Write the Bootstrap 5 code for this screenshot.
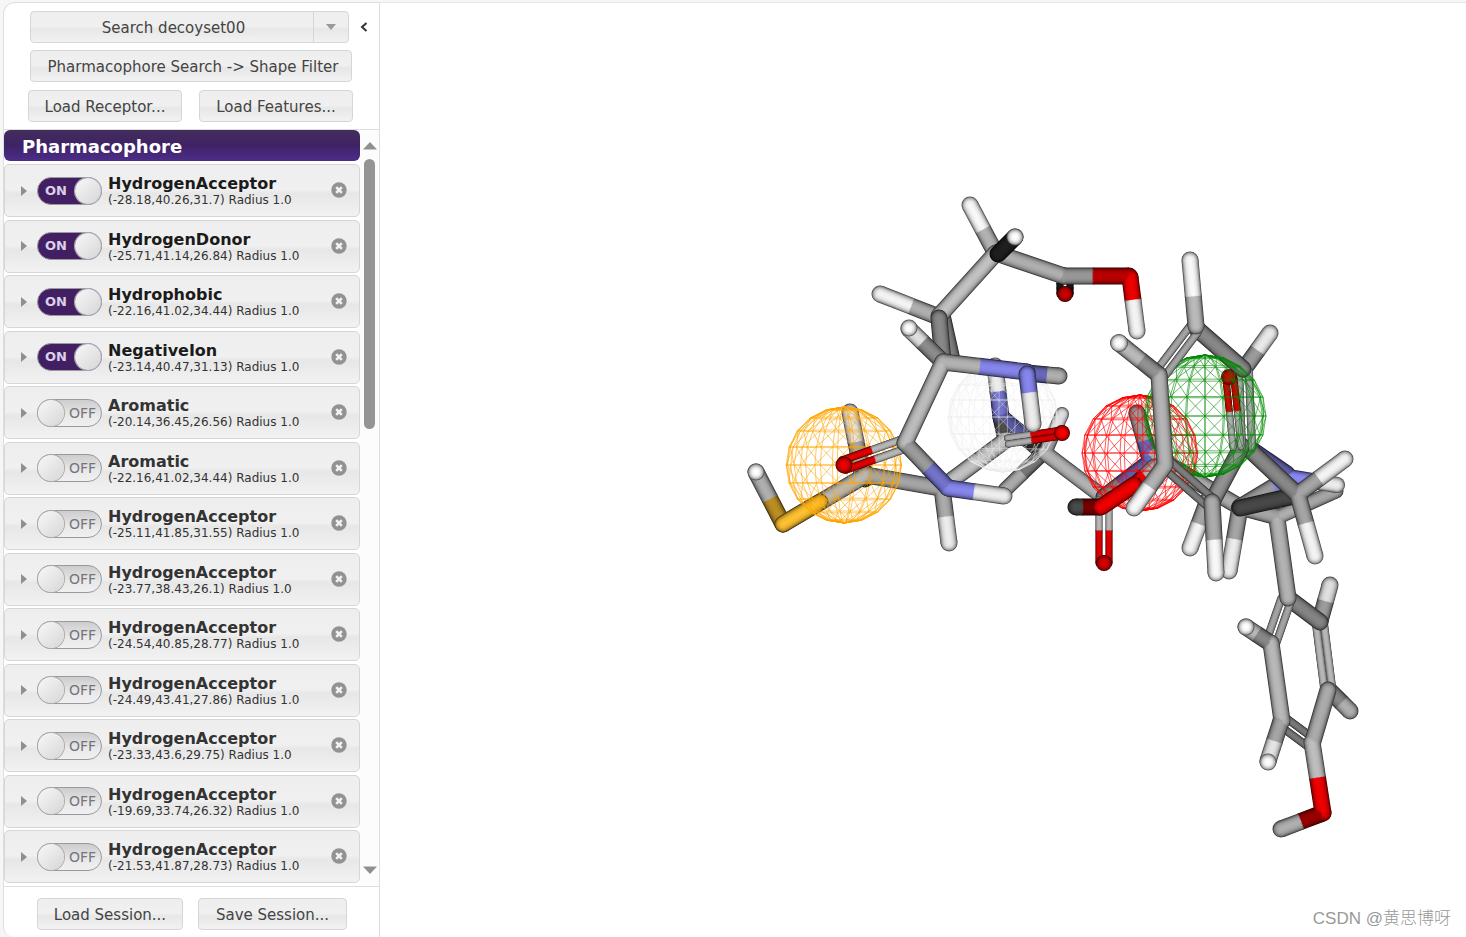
<!DOCTYPE html>
<html lang="en">
<head>
<meta charset="utf-8">
<meta name="viewport" content="width=device-width, initial-scale=1">
<title>Pharmacophore Search</title>
<link href="https://cdn.jsdelivr.net/npm/bootstrap@5.3.0/dist/css/bootstrap.min.css" rel="stylesheet">
<script src="https://cdn.jsdelivr.net/npm/bootstrap@5.3.0/dist/js/bootstrap.bundle.min.js"></script>
<style>
  body { background: #f6f6f6; font-family: "DejaVu Sans", Verdana, sans-serif; color: #333; }
  .app { padding: 2px 0 0 3px; }
  .side { width: 377px; background: #fff; border: 1px solid #dedede; border-bottom: 0; border-radius: 12px 0 0 10px; }
  .stage { background: #fff; border-top: 1px solid #e8e8e8; }
  .ui-btn {
    --bs-btn-color: #444; --bs-btn-border-color: #d6d6d6; --bs-btn-hover-color: #222; --bs-btn-hover-border-color: #bbb;
    --bs-btn-border-radius: 4px; --bs-btn-padding-y: 0; --bs-btn-padding-x: 0; --bs-btn-font-size: 15px;
    height: 32px; line-height: 32px; white-space: nowrap;
  }
  .ui-btn, .feature { background: linear-gradient(#eee 0%, #f0f0f0 48%, #e7e7e7 56%, #f2f2f2 100%); }
  .side-top { height: 127px; padding: 8px 26px 0 24px; border-bottom: 1px solid #dedede; }
  .search-row { padding-left: 2px; margin-bottom: 7px; }
  .search-row .main-btn { width: 284px; padding-left: 3px; }
  .search-row .drop-btn { width: 36px; }
  .filter-btn { width: 322px; margin-left: 2px; padding-left: 4px; }
  .pair-btn { width: 154px; }
  .collapse-btn { width: 20px; height: 24px; margin: 4px -21px 0 0; }
  .panel-title { height: 31px; line-height: 33px; border-radius: 6px; padding-left: 18px; font-size: 18px; font-weight: 700; color: #fff;
    background: linear-gradient(#422e5b 0%, #3f2265 48%, #42246e 60%, #4c2d89 100%); }
  .list-wrap { min-height: 0; }
  .features { width: 356px; padding-bottom: 3px; }
  .feature-list { margin: 3px 0 0; }
  .feature { height: 53px; border: 1px solid #d6d6d6; border-radius: 5px; color: #333; }
  .expander { width: 32px; height: 32px; padding: 0 0 0 6px; }
  .feature-text { padding-top: 2px; }
  .feature-name { font-size: 16px; line-height: 18px; font-weight: 700; }
  .feature-on .feature-name { color: #1b1b1b; }
  .feature-pos { font-size: 12px; line-height: 15px; }
  .toggle { width: 65px; height: 28px; margin-right: 6px; }
  .toggle input { appearance: none; width: 65px; height: 28px; margin: 0; border: 1px solid #9b98a0; border-radius: 14px; display: block;
    background: linear-gradient(#cdcdcd, #e9e9e9 60%, #f0f0f0); }
  .toggle input:checked { border-color: #9b98a0; background: #421f63; }
  .toggle input::before { content: ""; display: block; width: 26px; height: 26px; border-radius: 50%;
    background: linear-gradient(135deg, #f8f8f8, #d6d6d6); box-shadow: 0 0 0 1px #a9a9ad; }
  .toggle input:checked::before { margin-left: 37px; }
  .toggle span { position: absolute; top: 0; line-height: 28px; font-size: 13px; pointer-events: none; }
  .toggle .txt-off { right: 6px; color: #74747c; font-size: 14px; }
  .toggle .txt-on { left: 8px; color: #dccfe8; font-weight: 700; }
  .close-btn { width: 16px; height: 16px; margin: -1px 12px 0 0; }
  .scroller { width: 19px; background: #fcfcfc; padding: 12px 0 12px; }
  .scroller button { height: 8px; }
  .thumb { width: 11px; height: 270px; margin-top: 9px; border-radius: 6px; background: #949494; }
  .side-bottom { height: 51px; padding: 11px 32px 0 33px; border-top: 1px solid #dedede; }
  .load-btn { width: 146px; }
  .save-btn { width: 149px; }
  .credit { position: absolute; right: 15px; bottom: 5px; font: 17px/26px "Liberation Sans", "Noto Sans CJK SC", sans-serif; font-weight: 300; color: #999; }
  .stage-svg { position: absolute; inset: 0; }
</style>
</head>
<body>
<div class="app d-flex vh-100">
  <aside class="side d-flex flex-column flex-shrink-0">
    <div class="side-top d-flex flex-column">
      <div class="search-row d-flex align-items-start">
        <div class="btn-group">
          <button class="btn ui-btn main-btn flex-grow-0" type="button">Search decoyset00</button>
          <button class="btn ui-btn drop-btn flex-grow-0 d-flex align-items-center justify-content-center" type="button" aria-label="More searches"><svg width="10" height="6"><path d="M0 0H10L5 6Z" fill="#999"/></svg></button>
        </div>
        <button class="btn border-0 p-0 collapse-btn ms-auto d-flex align-items-center justify-content-center" type="button" aria-label="Collapse panel"><svg width="8" height="10"><path d="M6.500 1L2 5L6.500 9" fill="none" stroke="#333" stroke-width="2"/></svg></button>
      </div>
      <button class="btn ui-btn filter-btn mb-2" type="button">Pharmacophore Search -&gt; Shape Filter</button>
      <div class="d-flex justify-content-between">
        <button class="btn ui-btn pair-btn" type="button">Load Receptor...</button>
        <button class="btn ui-btn pair-btn" type="button">Load Features...</button>
      </div>
    </div>
    <div class="list-wrap d-flex flex-grow-1">
      <div class="features d-flex flex-column">
        <h1 class="panel-title mb-0">Pharmacophore</h1>
        <ul class="feature-list list-unstyled d-flex flex-column justify-content-between flex-grow-1" id="features"></ul>
      </div>
      <div class="scroller d-flex flex-column align-items-center">
        <button class="btn border-0 p-0 lh-1 d-flex" type="button" aria-label="Scroll up"><svg width="14" height="8"><path d="M0 7.500L7 0L14 7.500Z" fill="#8f8f8f"/></svg></button>
        <div class="thumb"></div>
        <button class="btn border-0 p-0 lh-1 d-flex mt-auto" type="button" aria-label="Scroll down"><svg width="14" height="8"><path d="M0 .5L7 8L14 .5Z" fill="#8f8f8f"/></svg></button>
      </div>
    </div>
    <div class="side-bottom d-flex justify-content-between">
      <button class="btn ui-btn load-btn" type="button">Load Session...</button>
      <button class="btn ui-btn save-btn" type="button">Save Session...</button>
    </div>
  </aside>
  <main class="stage flex-grow-1 position-relative overflow-hidden">
    <svg id="mol" class="stage-svg w-100 h-100" viewBox="380 3 1086 934" role="img" aria-label="Molecule with pharmacophore spheres"></svg>
    <div class="credit">CSDN @黄思博呀</div>
  </main>
</div>
<script>
const features = [
  ['HydrogenAcceptor', '-28.18,40.26,31.7', 1], ['HydrogenDonor', '-25.71,41.14,26.84', 1],
  ['Hydrophobic', '-22.16,41.02,34.44', 1], ['NegativeIon', '-23.14,40.47,31.13', 1],
  ['Aromatic', '-20.14,36.45,26.56', 0], ['Aromatic', '-22.16,41.02,34.44', 0],
  ['HydrogenAcceptor', '-25.11,41.85,31.55', 0], ['HydrogenAcceptor', '-23.77,38.43,26.1', 0],
  ['HydrogenAcceptor', '-24.54,40.85,28.77', 0], ['HydrogenAcceptor', '-24.49,43.41,27.86', 0],
  ['HydrogenAcceptor', '-23.33,43.6,29.75', 0], ['HydrogenAcceptor', '-19.69,33.74,26.32', 0],
  ['HydrogenAcceptor', '-21.53,41.87,28.73', 0]
];
document.getElementById('features').innerHTML = features.map(([name, pos, on]) => `
  <li class="feature d-flex align-items-center ${on ? 'feature-on' : ''}">
    <button class="btn border-0 expander d-flex align-items-center justify-content-center" type="button" aria-label="Expand ${name}"><svg width="6" height="10"><path d="M0 0L6 5L0 10Z" fill="#8f8f8f"/></svg></button>
    <label class="toggle position-relative"><input type="checkbox" role="switch" aria-label="${name} ${pos}" ${on ? 'checked' : ''}><span class="${on ? 'txt-on' : 'txt-off'}">${on ? 'ON' : 'OFF'}</span></label>
    <div class="feature-text flex-grow-1"><div class="feature-name">${name}</div><div class="feature-pos">(${pos}) Radius 1.0</div></div>
    <button class="btn border-0 p-0 close-btn d-flex" type="button" aria-label="Remove ${name}"><svg width="16" height="16"><circle cx="8" cy="8" r="7.700" fill="#929292"/><path d="M5.200 5.200L10.800 10.800M10.800 5.200L5.200 10.800" stroke="#f2f2f2" stroke-width="2.600"/></svg></button>
  </li>`).join('');

// Stick model: element colours, shaded by nested strokes from rim to centre.
// Sticks of one depth group share their shading layers, so that joints blend; flush() closes a group.
const tint = { C: [194, 194, 194], H: [248, 248, 248], N: [137, 137, 242], O: [238, 0, 0], S: [252, 192, 48] };
const shade = [[1, .3], [.93, .5], [.86, .66], [.77, .77], [.66, .86], [.54, .93], [.4, .97], [.22, 1]];
const rgb = (el, f) => 'rgb(' + tint[el].map(v => Math.min(255, Math.round(v * f))) + ')';
let out = '', layers = shade.map(() => '');
function flush() { out += layers.join(''); layers = shade.map(() => ''); }
function ball(x, y, r, el, k = 1) {
  flush();
  shade.forEach(([s, f]) => out += `<circle cx="${x}" cy="${y}" r="${r * s}" fill="${rgb(el, f * k)}"/>`);
}
function half(n, x, y, mx, my, color, w) {
  layers[n] += `<path d="M${x} ${y}L${mx} ${my}" stroke="${color}" stroke-width="${w}"/><circle cx="${x}" cy="${y}" r="${w / 2}" fill="${color}"/>`;
}
function bond(x1, y1, x2, y2, a, b = a, cut = .5, k = 1, kb = k, w = 17) {
  const dx = x2 - x1, dy = y2 - y1, back = cut - 1 / Math.hypot(dx, dy);
  shade.forEach(([s, f], n) => {
    if (a === b && k === kb) {
      layers[n] += `<path d="M${x1} ${y1}L${x2} ${y2}" stroke="${rgb(b, f * kb)}" stroke-width="${w * s}" stroke-linecap="round"/>`;
    } else {
      half(n, x2, y2, x1 + dx * back, y1 + dy * back, rgb(b, f * kb), w * s);
      half(n, x1, y1, x1 + dx * cut, y1 + dy * cut, rgb(a, f * k), w * s);
    }
  });
}
function twin(x1, y1, x2, y2, a, b = a, cut = .5, k = 1, gap = 5, w = 7) {
  flush();
  const d = Math.hypot(x2 - x1, y2 - y1), nx = -(y2 - y1) / d * gap, ny = (x2 - x1) / d * gap;
  bond(x1 + nx, y1 + ny, x2 + nx, y2 + ny, a, b, cut, k, k, w);
  flush();
  bond(x1 - nx, y1 - ny, x2 - nx, y2 - ny, a, b, cut, k, k, w);
  flush();
}
// Wireframe sphere: 20 x 10 quads, each split by a diagonal.
function mesh(cx, cy, r, color, turn, width, opacity = 1) {
  flush();
  const p = (i, j) => {
    const t = j * Math.PI / 10, f = i * Math.PI / 10 + turn;
    const q = r * (1 + Math.sin(t) * Math.cos(f) * .035);
    return (cx + q * Math.sin(t) * Math.sin(f)).toFixed(1) + ' ' + (cy - q * Math.cos(t)).toFixed(1);
  };
  let d = '';
  for (let i = 0; i < 20; i++) for (let j = 0; j < 10; j++) d += `M${p(i, j)}L${p(i, j + 1)}L${p(i + 1, j)}L${p(i, j)}`;
  out += `<path d="${d}" fill="none" stroke="${color}" stroke-width="${width}" opacity="${opacity}"/>`;
}

// Left fragment, rear atoms
bond(865, 479, 865, 472, 'C', 'C', .5, .1);
flush();
bond(850, 412, 862, 472, 'H', 'C', .5, .92, .85);
flush();
bond(942, 315, 952, 360, 'C', 'C', .5, .66);
flush();
bond(995, 366, 1001, 417, 'H', 'N', .5, .95, .85);
bond(1001, 417, 1044, 453, 'N', 'C', .62, .65, .2);
bond(1001, 417, 1006, 440, 'N', 'C', .15, .65, .4);
flush();
bond(1005, 490, 1040, 456, 'C', 'C', .5, .88, .62, 15);
flush();
bond(1062, 414, 1045, 453, 'H', 'C', .4, .9, .85, 14);
bond(1103, 497, 1045, 453, 'C', 'C', .5, .92, .92, 16);
flush();
bond(949, 543, 942, 488, 'H', 'C', .48, .95, .88);
bond(866, 475, 940, 488, 'C', 'C', .5, .85);
bond(1006, 440, 944, 486, 'C');
bond(783, 524, 866, 475, 'S', 'C', .48, 1, .95);
flush();
bond(756, 472, 783, 524, 'C', 'S', .52, .9, .74);
flush();
bond(783, 524, 820, 502, 'S');
ball(756, 472, 8.500, 'H', 1.03);
mesh(844, 465, 58, '#ffa500', .12, .8, .75);
mesh(1003, 417, 55, '#ebebeb', .08, .7, .65);
twin(1062, 433, 1008, 441, 'O', 'C', .58, .9, 3, 7);
ball(1062, 433, 8, 'O', 1.050);

// Left fragment, front atoms
bond(970, 205, 996, 254, 'H', 'C', .5, 1, .92);
bond(880, 294, 939, 317, 'H', 'C', .53, .98, .9);
flush();
twin(1065, 283, 1065, 294, 'C', 'O', .5, .12, 5, 7);
ball(1065, 294, 8, 'O', .85);
bond(939, 316, 996, 253, 'C', 'C', .5, 1);
bond(1064, 276, 996, 253, 'C', 'C', .5, .9);
bond(1129, 276, 1064, 276, 'O', 'C', .56, .78, .78);
bond(1137, 331, 1130, 277, 'H', 'O', .58, .98, 1);
flush();
bond(1015, 237, 998, 254, 'C', 'C', .5, .16);
ball(1015, 237, 8.500, 'H', 1.03);
bond(939, 318, 943, 362, 'C', 'C', .5, .7);
flush();
bond(909, 329, 943, 362, 'H', 'C', .4, .9, .72);
ball(909, 328, 8.500, 'H', 1.03);
bond(1059, 376, 1027, 373, 'C', 'N', .38, .9, .76);
twin(844, 465, 901, 445, 'O', 'C', .52, .95, 5, 8);
ball(844, 465, 8.500, 'O');
bond(905, 443, 948, 488, 'C', 'N', .55, .8, .84);
bond(943, 362, 905, 443, 'C', 'C', .5, .97);
bond(943, 362, 1027, 372, 'C', 'N', .44, .92, .97);
bond(1004, 496, 948, 488, 'H', 'N', .54, .96, .98);
flush();
bond(1033, 424, 1027, 374, 'H', 'N', .63, .95, .98);

// Lower ring
bond(1330, 585, 1320, 621, 'C', 'C', .45, 1.150, .8);
flush();
bond(1350, 711, 1329, 690, 'C', 'C', .4, .9, .7);
twin(1320, 624, 1328, 687, 'C', 'C', .5, .95, 4, 8);
bond(1288, 598, 1320, 622, 'C', 'C', .5, .68);
twin(1286, 600, 1271, 643, 'C', 'C', .5, .85, 5, 8);
twin(1283, 722, 1310, 742, 'C', 'C', .5, .62, 5, 8);
bond(1328, 690, 1313, 741, 'C', 'C', .5, .88);
bond(1281, 829, 1323, 813, 'C', 'O', .48, .9, .64);
bond(1323, 813, 1312, 742, 'O', 'C', .5, 1, .98);
bond(1246, 627, 1270, 643, 'C', 'C', .45, .95, .7);
bond(1271, 643, 1282, 721, 'C', 'C', .5, .95);
bond(1268, 761, 1281, 721, 'H', 'C', .5, .92, .85);
ball(1246, 627, 8.500, 'H', 1.03);
ball(1268, 762, 8.500, 'H', 1.03);

// Right fragment, rear atoms
bond(1104, 497, 1150, 462, 'C', 'N', .35, .7, .7);
bond(1137, 413, 1150, 459, 'C', 'N', .6, .8, .75);
bond(1150, 454, 1240, 507, 'C', 'C', .5, .88);
twin(1104, 563, 1104, 500, 'O', 'C', .52, .95, 5, 7);
ball(1104, 563, 8, 'O', .9);
bond(1155, 467, 1133, 487, 'C', 'O', .45, .9, .95);
mesh(1140, 453, 58, '#ff0000', .05, .8, .8);
bond(1076, 507, 1100, 507, 'C', 'O', .3, .38, .5);
flush();
bond(1101, 507, 1134, 485, 'O', 'O', .5, 1);
flush();
bond(1190, 548, 1208, 500, 'H', 'C', .5, .98, .85);
flush();
bond(1278, 517, 1336, 491, 'C', 'C', .5, .9, .85, 15);
bond(1240, 507, 1278, 517, 'C', 'C', .5, .85);
bond(1288, 598, 1277, 519, 'C', 'C', .5, .92);
bond(1229, 571, 1240, 507, 'H', 'C', .5, .95, .85);
flush();
bond(1287, 474, 1252, 450, 'N', 'N', .5, .7);
bond(1288, 478, 1240, 507, 'N', 'C', .3, .97, .8);
bond(1337, 485, 1288, 477, 'H', 'N', .35, .95, 1, 16);
flush();
bond(1298, 495, 1240, 508, 'C', 'C', .5, .37);
flush();
bond(1250, 450, 1298, 495, 'C', 'C', .5, .7);
bond(1315, 556, 1298, 495, 'H', 'C', .54, .98, .85);
bond(1345, 459, 1298, 494, 'H', 'C', .56, .98, .85);
flush();
bond(1242, 446, 1213, 500, 'C', 'C', .5, .75);
flush();
bond(1270, 333, 1244, 369, 'H', 'C', .48, .94, .8);
twin(1244, 372, 1247, 447, 'C', 'C', .5, .88, 5, 8);
twin(1230, 379, 1237, 447, 'O', 'C', .48, .9, 4, 7);
ball(1229, 377, 8, 'O', .9);
bond(1196, 328, 1243, 369, 'C', 'C', .5, .7);
mesh(1205, 416, 61, '#008a00', 0, .8, .75);

// Right fragment, front ring
twin(1165, 463, 1211, 503, 'C', 'C', .5, .65, 5, 8);
bond(1216, 573, 1212, 502, 'H', 'C', .47, 1, .88);
twin(1160, 374, 1194, 329, 'C', 'C', .5, .85, 5, 8);
bond(1190, 260, 1196, 326, 'H', 'C', .55, 1, .96);
bond(1119, 343, 1159, 375, 'C', 'C', .55, .96, .75);
bond(1159, 375, 1165, 463, 'C', 'C', .5, .93);
bond(1134, 508, 1165, 465, 'H', 'C', .5, 1, .92);
ball(1119, 343, 9, 'H', 1.03);
document.getElementById('mol').innerHTML = `<g fill="none">${out}</g>`;
</script>
</body>
</html>
